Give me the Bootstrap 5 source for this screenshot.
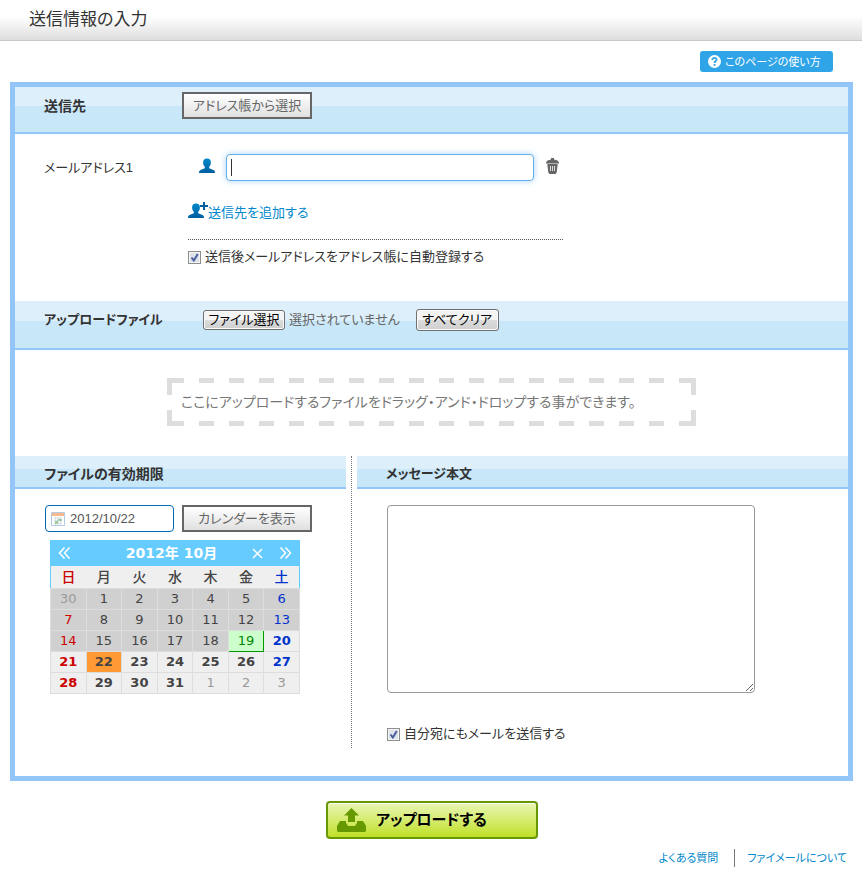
<!DOCTYPE html>
<html lang="ja">
<head>
<meta charset="utf-8">
<meta name="viewport" content="width=device-width, initial-scale=1">
<title>送信情報の入力</title>
<link rel="stylesheet" href="https://cdn.jsdelivr.net/npm/bootstrap@5.3.0/dist/css/bootstrap.min.css">
<style>
body{font-family:"Liberation Sans","Noto Sans CJK JP",sans-serif;font-feature-settings:"palt";font-size:13px;line-height:20px;color:#333;background:#fff}
button,input,textarea{font-feature-settings:inherit}
a{color:#0088cc;text-decoration:none}
.page-head{height:41px;padding:0 29px;border-bottom:1px solid #c8c8c8;background:linear-gradient(#fff 40%,#dedede)}
.page-head h1{font-size:17px;line-height:24px;font-weight:400}
.help{height:21px;width:133px;padding:0 8px;gap:4px;border-radius:3px;background:#2fa4e7;color:#fff;font-size:11px}
.help-row{padding:10px 29px}
.frame{margin:0 9px 0 10px;border:5px solid #94c5f8}
.bar{padding:0 29px 10px;border-bottom:2px solid #94c5f8;background:linear-gradient(#dceffb 0 43%,#c8e7f9 43%)}
.bar h2{font-size:14px;line-height:20px;font-weight:700;margin:0}
.bar .kana{font-size:13px}
.bar-to{height:47px;padding-bottom:8px}
.bar-file{height:49px}
.bar-half{height:33px;padding:5px 29px 0}
.bar-to h2{width:138px}
.bar-file h2{width:159px}
.tool{width:130px;height:27px;padding:0;border:2px solid #666;background:linear-gradient(#fff,#e0e0e0);color:#666;font-size:13px;line-height:20px}
.native{padding:0;border:1px solid #707070;border-radius:3px;background:linear-gradient(#f4f4f4 0 50%,#dcdcdc 50%,#cfcfcf);box-shadow:inset 0 0 0 1px #fafafa;color:#000;font-size:13px;line-height:18px}
.pick{width:82px;height:20px}
.clear{width:83px;height:22px;margin-left:16px}
.none{color:#666}
.to-body{padding:20px 29px 34px}
.to-label{width:144px;padding-top:4px}
.to-fields{width:375px}
.mail{height:27px;width:308px;margin:0 12px 0 11px;border:1px solid #66afe9;border-radius:4px;box-shadow:0 0 6px #a9d3f5;padding:0 8px;outline:0;background:linear-gradient(#333,#333) 4px 4px/1px 17px no-repeat #fff}
.add-row{margin-top:21px;height:38px;border-bottom:1px dotted #555}
.save-row{margin-top:7px}
.tick{appearance:none;flex:none;width:13px;height:13px;margin:0;border:1px solid #8e8f8f;box-shadow:inset 0 0 0 1px #f4f4f4;background:url("data:image/svg+xml,%3Csvg xmlns='http://www.w3.org/2000/svg' viewBox='0 0 11 11'%3E%3Cpath d='M2.500 5.500l2.300 3L8.800 2' fill='none' stroke='%234b5fa0' stroke-width='2'/%3E%3C/svg%3E") center/11px #dfe2e8}
.drop-wrap{padding:28px 152px 30px}
.drop{height:48px;padding:0 14px;color:#777;font-size:14px;white-space:nowrap;
background:
linear-gradient(#ddd,#ddd) 0 0/5px 17px no-repeat,
linear-gradient(#ddd,#ddd) 100% 0/5px 17px no-repeat,
linear-gradient(#ddd,#ddd) 0 100%/5px 16px no-repeat,
linear-gradient(#ddd,#ddd) 100% 100%/5px 16px no-repeat,
linear-gradient(90deg,#ddd 15px,transparent 15px) 2px 0/30px 5px repeat-x,
linear-gradient(90deg,#ddd 15px,transparent 15px) 2px 100%/30px 5px repeat-x}
.left{width:331px}
.split{width:1px;height:292px;margin:0 5px;border-left:1px dotted #777}
.halves{padding-bottom:28px}
.term{padding:16px 30px 0}
.datebox{width:129px;height:27px;padding:0 5px;gap:3px;border:1px solid #0069b4;border-radius:4px}
.datebox input{width:90px;border:0;padding:0 0 0 2px;outline:0;color:#555;font-size:13px;background:transparent}
.cal{width:250px;margin:8px 0 0 5px;font-family:"DejaVu Sans","Noto Sans CJK JP",sans-serif;font-size:13px;background:#efefef}
.cal-top{height:26px;padding:0 8px;background:#66ccff;color:#fff;font-size:14px;font-weight:700}
.cal-top button{border:0;padding:0;background:none;line-height:0;color:#fff}
.cal-top span{padding-left:20px}
.cal table{width:100%;table-layout:fixed;border-collapse:collapse;line-height:20px;text-align:center;color:#444}
.cal th,.cal td{padding:0;height:21px;border:1px solid #ddd;font-weight:400}
.cal th{height:22px;border:0;font-size:14px;font-weight:500}
.cal thead{border:solid #66ccff;border-width:0 1px}
.cal .gone{background:#d0d0d0}
.cal .on{font-weight:700}
.cal .sun{color:#c00}
.cal .sat{color:#03c}
.cal .out{color:#999}
.cal .today{background:#cfc;color:#080;border-right-color:#090;border-bottom-color:#090}
.cal .picked{background:#f93}
.msg{padding:16px 30px 0}
.msg textarea{display:block;width:368px;max-width:100%;height:188px;border:1px solid #999;border-radius:4px;outline:0}
.self{margin-top:31px}
.send{width:212px;height:38px;padding:0 9px;gap:10px;border:2px solid #690;border-radius:4px;background:linear-gradient(#eaf6b5,#bfe028);box-shadow:inset 0 1px 0 #fff;color:#000;font-size:15px;font-weight:700}
.send-row{padding:20px 0 0 2px}
.links{padding:10px 15px 0;font-size:11px;line-height:18px}
.links a+a{border-left:1px solid #777;margin-left:16px;padding-left:12px}
</style>
<script src="https://cdn.jsdelivr.net/npm/bootstrap@5.3.0/dist/js/bootstrap.bundle.min.js"></script>
</head>
<body>
<svg width="0" height="0" class="position-absolute" aria-hidden="true">
<defs>
<linearGradient id="blue" x2="0" y2="1"><stop offset="0" stop-color="#0088cc"/><stop offset="1" stop-color="#005f9e"/></linearGradient>
<symbol id="person" viewBox="0 0 16 16"><path fill="url(#blue)" d="M8 0.500c2.500 0 4 1.500 3.900 4 0 1.900-.7 3.200-1.700 4.200v1.600l4.300 1.700c1 .4 1.500 1.300 1.500 3H0c0-1.700.5-2.600 1.500-3l4.300-1.700V8.700C4.800 7.700 4.100 6.400 4.100 4.500 4 2 5.500.5 8 .5z"/></symbol>
</defs>
</svg>
<header class="page-head d-flex align-items-center"><h1 class="m-0">送信情報の入力</h1></header>
<div class="help-row d-flex justify-content-end">
<a href="#" class="help d-flex align-items-center">
<svg width="13" height="13" viewBox="0 0 13 13" aria-hidden="true"><circle cx="6.500" cy="6.500" r="6.500" fill="#fff"/><path d="M4.300 5c0-3 4.500-2.700 4.300-.2C8.500 6 6.500 6.200 6.500 8" fill="none" stroke="#2fa4e7" stroke-width="1.800"/><path d="M5.600 9h1.900v1.800H5.600z" fill="#2fa4e7"/></svg>
このページの使い方</a>
</div>
<main>
<form class="frame">
<section>
<div class="bar bar-to d-flex align-items-center"><h2>送信先</h2><button type="button" class="tool">アドレス帳から選択</button></div>
<div class="to-body d-flex">
<label class="to-label" for="mail">メールアドレス1</label>
<div class="to-fields">
<div class="d-flex align-items-center">
<svg class="ms-2 mb-1 flex-shrink-0" width="19" height="16" viewBox="-3 0 19 16" aria-hidden="true"><use href="#person" width="16" height="16"/></svg>
<input id="mail" class="mail" type="text">
<button type="button" class="border-0 bg-transparent p-0 lh-1" aria-label="削除"><svg class="mb-1" width="13" height="16" viewBox="0 0 13 16" aria-hidden="true"><path d="M5 0h3v1.500l3.500 1L13 4.500v1H0v-1l1.500-2 3.500-1zM1.300 6h10.400l-1 8.500L9.500 16h-6l-1.200-1.500z" fill="#666"/><path d="M4.500 8v5M6.500 8v5M8.500 8v5" stroke="#ddd"/></svg></button>
</div>
<div class="add-row"><a href="#" class="d-flex align-items-center"><svg class="flex-shrink-0 mb-1" width="20" height="17" viewBox="0 0 20 17" aria-hidden="true"><use href="#person" y="1" width="16" height="16"/><path d="M16 0v8M12 4h8" stroke="#005f9e" stroke-width="2"/></svg><span>送信先を追加する</span></a></div>
<div class="save-row d-flex align-items-center gap-1"><input class="tick" type="checkbox" id="save" checked><label for="save">送信後メールアドレスをアドレス帳に自動登録する</label></div>
</div>
</div>
</section>
<section>
<div class="bar bar-file d-flex align-items-center"><h2 class="kana">アップロードファイル</h2><button type="button" class="native pick">ファイル選択</button><span class="none ms-1">選択されていません</span><button type="button" class="native clear">すべてクリア</button></div>
<div class="drop-wrap"><div class="drop d-flex align-items-center">ここにアップロードするファイルをドラッグ・アンド・ドロップする事ができます。</div></div>
</section>
<div class="halves d-flex">
<section class="left flex-shrink-0">
<div class="bar bar-half d-flex align-items-center"><h2><label for="until">ファイルの有効期限</label></h2></div>
<div class="term">
<div class="d-flex">
<div class="datebox d-flex align-items-center"><svg class="flex-shrink-0" width="14" height="14" viewBox="0 0 14 14" aria-hidden="true"><path d="M.5.5h13v13H.5z" fill="#fff" stroke="#b5cbe5"/><path d="M1 1h12v3H1z" fill="#f9b98d"/><path d="M3 6h8M3 8.500h8M3 11h8M4.500 5v8M7 5v8M9.500 5v8" stroke="#d4dde8"/><path d="M7 7h4v2H7zM4 9h3v3H4z" fill="#9fcb9f"/></svg><input type="text" id="until" value="2012/10/22"></div>
<button type="button" class="tool ms-auto me-1">カレンダーを表示</button>
</div>
<div class="cal">
<div class="cal-top d-flex align-items-center justify-content-between"><button type="button" aria-label="前の月"><svg width="13" height="12" viewBox="0 0 13 12"><path d="M6.500.5L1.500 6l5 5.500M11.500.5L6.500 6l5 5.500" fill="none" stroke="#fff" stroke-width="1.500"/></svg></button><span>2012年 10月</span><div class="d-flex gap-3"><button type="button" aria-label="閉じる"><svg width="11" height="11" viewBox="0 0 11 11"><path d="M1 1l9 9M10 1l-9 9" stroke="#fff" stroke-width="1.500"/></svg></button><button type="button" aria-label="次の月"><svg width="13" height="12" viewBox="0 0 13 12"><path d="M1.500.5l5 5.500-5 5.500M6.500.5l5 5.500-5 5.500" fill="none" stroke="#fff" stroke-width="1.500"/></svg></button></div></div>
<table>
<thead><tr><th class="sun">日</th><th>月</th><th>火</th><th>水</th><th>木</th><th>金</th><th class="sat">土</th></tr></thead>
<tbody>
<tr><td class="gone out">30</td><td class="gone">1</td><td class="gone">2</td><td class="gone">3</td><td class="gone">4</td><td class="gone">5</td><td class="gone sat">6</td></tr>
<tr><td class="gone sun">7</td><td class="gone">8</td><td class="gone">9</td><td class="gone">10</td><td class="gone">11</td><td class="gone">12</td><td class="gone sat">13</td></tr>
<tr><td class="gone sun">14</td><td class="gone">15</td><td class="gone">16</td><td class="gone">17</td><td class="gone">18</td><td class="today">19</td><td class="on sat">20</td></tr>
<tr><td class="on sun">21</td><td class="on picked">22</td><td class="on">23</td><td class="on">24</td><td class="on">25</td><td class="on">26</td><td class="on sat">27</td></tr>
<tr><td class="on sun">28</td><td class="on">29</td><td class="on">30</td><td class="on">31</td><td class="out">1</td><td class="out">2</td><td class="out">3</td></tr>
</tbody>
</table>
</div>
</div>
</section>
<div class="split"></div>
<section class="flex-grow-1">
<div class="bar bar-half d-flex align-items-center"><h2 class="kana"><label for="body">メッセージ本文</label></h2></div>
<div class="msg">
<textarea id="body"></textarea>
<div class="self d-flex align-items-center gap-1"><input class="tick" type="checkbox" id="self" checked><label for="self">自分宛にもメールを送信する</label></div>
</div>
</section>
</div>
</form>
<div class="send-row d-flex justify-content-center"><button type="button" class="send d-flex align-items-center"><svg width="29" height="24" viewBox="0 0 29 24" aria-hidden="true"><path d="M14.500 0L22 7.500h-4V14h-7V7.500H7z" fill="#690"/><path d="M3 13h6v2l2 3h7l2-3v-2h6l3 5v5l-1 1H1l-1-1v-5z" fill="#690"/></svg>アップロードする</button></div>
</main>
<footer class="links d-flex justify-content-end"><a href="#">よくある質問</a><a href="#">ファイメールについて</a></footer>
</body>
</html>
